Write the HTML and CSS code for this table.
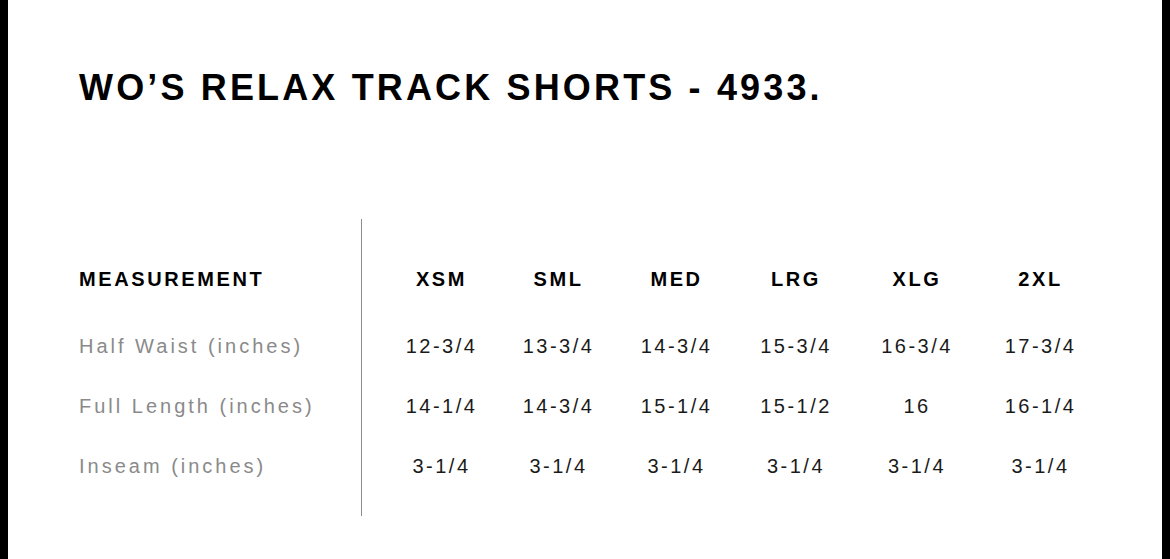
FILE: index.html
```html
<!DOCTYPE html>
<html lang="en">
<head>
<meta charset="utf-8">
<title>WO’S RELAX TRACK SHORTS - 4933.</title>
<link rel="stylesheet" href="styles.css">
</head>
<body>
<main class="page">
  <h1 class="title">WO’S RELAX TRACK SHORTS - 4933.</h1>
  <section class="chart">
    <div class="labels">
      <div class="cell head">MEASUREMENT</div>
      <div class="cell label">Half Waist (inches)</div>
      <div class="cell label">Full Length (inches)</div>
      <div class="cell label">Inseam (inches)</div>
    </div>
    <div class="sizes">
      <div class="cell head">XSM</div>
      <div class="cell head">SML</div>
      <div class="cell head">MED</div>
      <div class="cell head">LRG</div>
      <div class="cell head">XLG</div>
      <div class="cell head">2XL</div>

      <div class="cell val">12-3/4</div>
      <div class="cell val">13-3/4</div>
      <div class="cell val">14-3/4</div>
      <div class="cell val">15-3/4</div>
      <div class="cell val">16-3/4</div>
      <div class="cell val">17-3/4</div>

      <div class="cell val">14-1/4</div>
      <div class="cell val">14-3/4</div>
      <div class="cell val">15-1/4</div>
      <div class="cell val">15-1/2</div>
      <div class="cell val">16</div>
      <div class="cell val">16-1/4</div>

      <div class="cell val">3-1/4</div>
      <div class="cell val">3-1/4</div>
      <div class="cell val">3-1/4</div>
      <div class="cell val">3-1/4</div>
      <div class="cell val">3-1/4</div>
      <div class="cell val">3-1/4</div>
    </div>
  </section>
</main>
</body>
</html>
```

FILE: styles.css
```css
html, body {
  margin: 0;
  padding: 0;
  background: #000;
}
body {
  width: 1170px;
  height: 559px;
  overflow: hidden;
  font-family: "Liberation Sans", Arial, Helvetica, sans-serif;
}
.page {
  margin: 0 8px;
  height: 559px;
  background: #fff;
  padding-left: 71px;
  box-sizing: border-box;
}
.title {
  margin: 0;
  padding-top: 68px;
  font-size: 36px;
  line-height: 40px;
  font-weight: 700;
  letter-spacing: 3.15px;
  color: #000;
}
.chart {
  display: flex;
  margin-top: 111px;
}
.labels {
  width: 282px;
  border-right: 1px solid #8c8c8c;
  padding: 30px 0 20px;
  display: flex;
  flex-direction: column;
}
.sizes {
  padding: 30px 0 20px 21px;
  display: grid;
  grid-template-columns: 117px 117px 119px 120px 122px 125px;
  grid-auto-rows: auto;
  align-content: start;
}
.head {
  margin-bottom: 7px;
}
.cell {
  height: 60px;
  display: flex;
  align-items: center;
  font-size: 20px;
  white-space: nowrap;
}
.sizes .cell {
  justify-content: center;
}
.head {
  font-weight: 700;
  letter-spacing: 2.6px;
  color: #000;
}
.label {
  color: #8a8a8a;
  letter-spacing: 3px;
}
.val {
  color: #1a1a1a;
  letter-spacing: 2.5px;
}
```
